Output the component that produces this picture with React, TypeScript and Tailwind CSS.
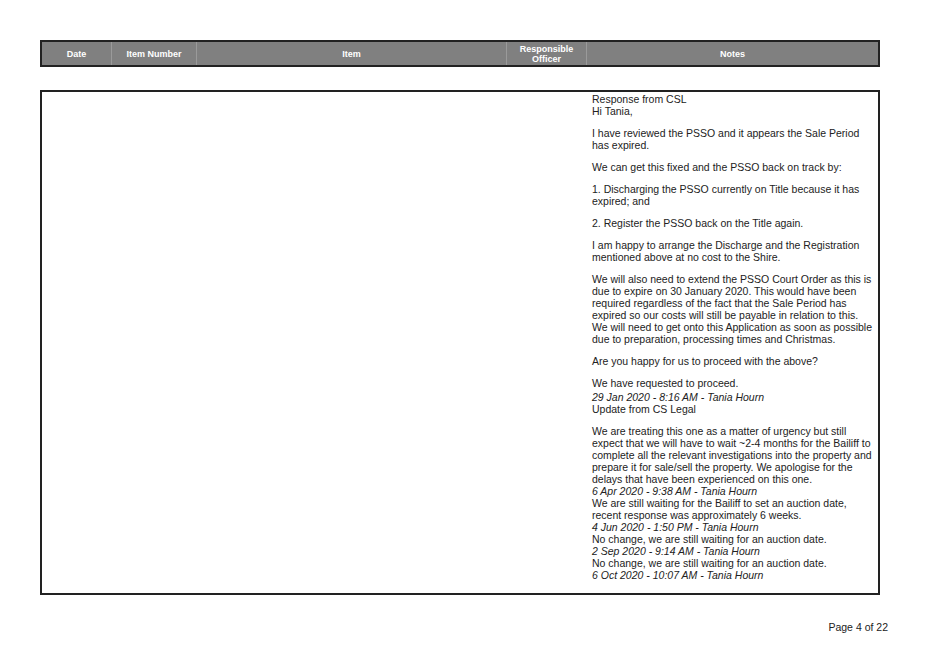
export default function App() {
  const cols = [
    { w: 70, t: "Date" },
    { w: 85, t: "Item Number" },
    { w: 310, t: "Item" },
    { w: 80, t: "Responsible Officer" },
    { w: 291, t: "Notes" },
  ];
  const P = ({ children }: { children: React.ReactNode }) => <p className="mb-[10px]">{children}</p>;
  const I = ({ children }: { children: React.ReactNode }) => <p className="italic">{children}</p>;
  return (
    <div className="w-[928px] h-[656px] bg-white relative" style={{ fontFamily: '"Liberation Sans", Arial, sans-serif' }}>
      <div className="absolute left-[40px] top-[40px] w-[840px] h-[27px] bg-[#808080] border-2 border-[#222] flex">
        {cols.map((c, i) => (
          <div key={i} style={{ width: c.w }} className={`h-full flex items-center justify-center text-center text-white font-bold text-[9px] leading-[10px] ${i < 4 ? "border-r border-[#9a9a9a]" : ""}`}>
            <span className={i === 3 ? "w-[55px]" : ""}>{c.t}</span>
          </div>
        ))}
      </div>
      <div className="absolute left-[40px] top-[90px] w-[840px] h-[505px] border-2 border-[#222] flex">
        <div className="w-[544px]" />
        <div className="w-[290px] pl-[6px] pt-[1px] text-[10.5px] leading-[12px] text-[#222]">
          <p>Response from CSL</p>
          <P>Hi Tania,</P>
          <P>I have reviewed the PSSO and it appears the Sale Period has expired.</P>
          <P>We can get this fixed and the PSSO back on track by:</P>
          <P>1. Discharging the PSSO currently on Title because it has expired; and</P>
          <P>2. Register the PSSO back on the Title again.</P>
          <P>I am happy to arrange the Discharge and the Registration mentioned above at no cost to the Shire.</P>
          <P>We will also need to extend the PSSO Court Order as this is due to expire on 30 January 2020. This would have been required regardless of the fact that the Sale Period has expired so our costs will still be payable in relation to this. We will need to get onto this Application as soon as possible due to preparation, processing times and Christmas.</P>
          <P>Are you happy for us to proceed with the above?</P>
          <p className="mb-[2px]">We have requested to proceed.</p>
          <I>29 Jan 2020 - 8:16 AM - Tania Hourn</I>
          <P>Update from CS Legal</P>
          <p>We are treating this one as a matter of urgency but still expect that we will have to wait ~2-4 months for the Bailiff to complete all the relevant investigations into the property and prepare it for sale/sell the property. We apologise for the delays that have been experienced on this one.</p>
          <I>6 Apr 2020 - 9:38 AM - Tania Hourn</I>
          <p>We are still waiting for the Bailiff to set an auction date, recent response was approximately 6 weeks.</p>
          <I>4 Jun 2020 - 1:50 PM - Tania Hourn</I>
          <p>No change, we are still waiting for an auction date.</p>
          <I>2 Sep 2020 - 9:14 AM - Tania Hourn</I>
          <p>No change, we are still waiting for an auction date.</p>
          <I>6 Oct 2020 - 10:07 AM - Tania Hourn</I>
        </div>
      </div>
      <div className="absolute right-[40px] top-[620px] text-[10.5px] text-[#222]">Page 4 of 22</div>
    </div>
  );
}
